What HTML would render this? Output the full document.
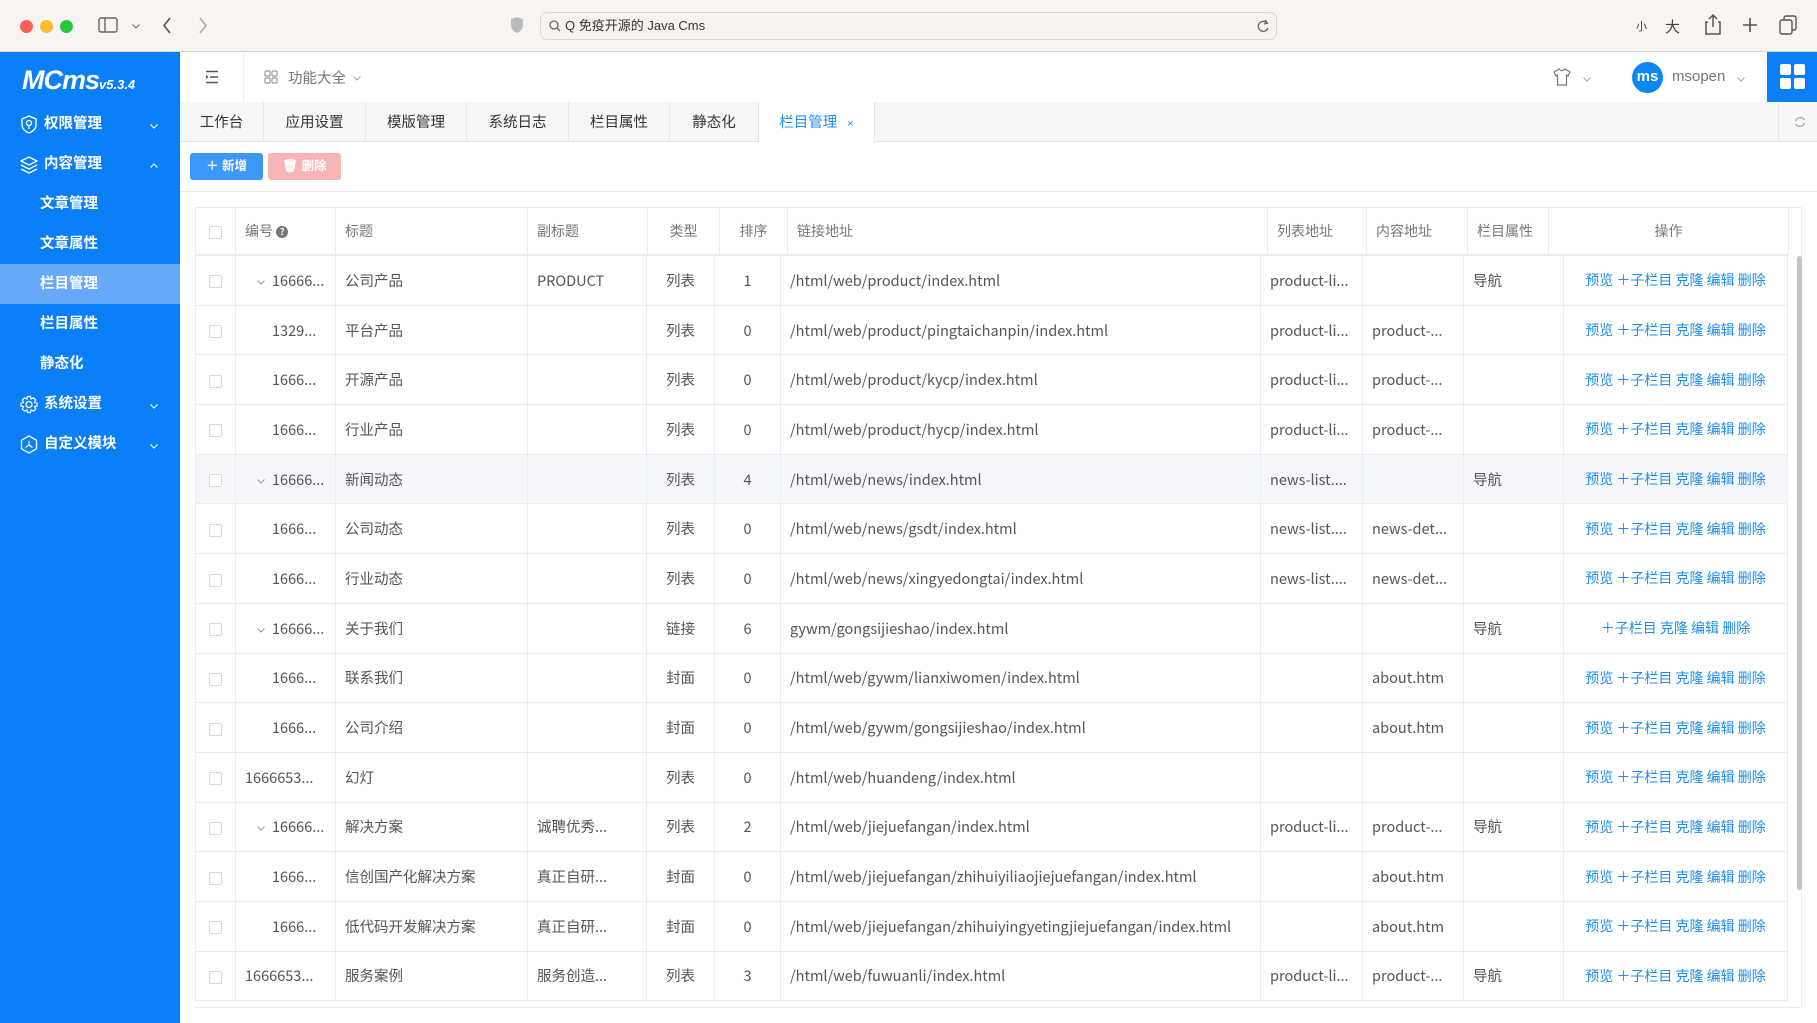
<!DOCTYPE html>
<html><head><meta charset="utf-8">
<style>
*{box-sizing:border-box;margin:0;padding:0}
body{width:1817px;height:1023px;overflow:hidden;background:#fff;font-family:"Liberation Sans","Noto Sans CJK SC",sans-serif;color:#555;position:relative}
.abs{position:absolute}
#chrome{left:0;top:0;width:1817px;height:52px;background:#f8f4f1;border-bottom:1px solid #dcd8d5}
.dot{position:absolute;top:20px;width:13px;height:13px;border-radius:50%}
#url{left:540px;top:12px;width:737px;height:28px;border:1px solid #dcd7d3;border-radius:7px;background:#f7f3f0;font-size:13px;color:#333;line-height:26px;padding-left:24px}
#side{left:0;top:52px;width:180px;height:971px;background:#0a7ff8;color:#fff}
.mi{position:absolute;left:0;width:180px;height:40px;line-height:40px;font-size:14.5px;font-weight:bold}
.mi svg.ic{position:absolute;left:20px;top:11px}
.chev{position:absolute;left:149px;top:17px}
#head{left:180px;top:52px;width:1637px;height:50px;background:#fff;box-shadow:0 2px 6px rgba(0,0,0,.06)}
#tabs{left:180px;top:102px;width:1637px;height:40px;background:#f7f7f7;border-bottom:1px solid #e4e4e8}
.tab{position:absolute;top:0;height:40px;line-height:42px;text-align:center;font-size:14.5px;color:#333;border-right:1px solid #e6e6e6}
.btn{position:absolute;top:153px;height:27px;line-height:27px;border-radius:3px;color:#fff;font-size:12.5px;font-weight:bold;text-align:center}
table{border-collapse:collapse;table-layout:fixed;position:absolute;font-family:"Noto Sans CJK SC","Liberation Sans",sans-serif}
td{border:1px solid #e9ecf3;font-size:14.5px;color:#555;white-space:nowrap;overflow:hidden;padding:0 9px}
.hd td{height:47px;color:#777;font-size:14px}
.bd td{height:49.7px}
.c{text-align:center}
.cb{display:inline-block;width:13px;height:13px;border:1px solid #d8d8d8;border-radius:2px;background:#fff;vertical-align:middle}
.op{color:#1d8cf3;font-size:14px;text-align:center;padding:0}
.ar{display:inline-block;width:10px;height:10px;margin-right:6px;vertical-align:middle}
</style></head><body>
<svg width="0" height="0" style="position:absolute"><defs><symbol id="dn" viewBox="0 0 10 10"><path d="M1.5 3.5 L5 7 L8.5 3.5" fill="none" stroke="currentColor" stroke-width="1.1"/></symbol></defs></svg>
<div id="chrome" class="abs">
 <div class="dot" style="left:20px;background:#fd5e57"></div>
 <div class="dot" style="left:40px;background:#febb2e"></div>
 <div class="dot" style="left:60px;background:#29c840"></div>
 <svg class="abs" style="left:98px;top:17px" width="20" height="17"><rect x="1" y="1" width="18" height="14" rx="2" fill="none" stroke="#666" stroke-width="1.4"/><line x1="7" y1="1" x2="7" y2="15" stroke="#666" stroke-width="1.4"/></svg>
 <svg class="abs" style="left:131px;top:21px;color:#777" width="10" height="10"><use href="#dn"/></svg>
 <svg class="abs" style="left:162px;top:17px" width="10" height="17"><path d="M8 1 L2 8.5 L8 16" fill="none" stroke="#555" stroke-width="1.6"/></svg>
 <svg class="abs" style="left:198px;top:17px" width="10" height="17"><path d="M2 1 L8 8.5 L2 16" fill="none" stroke="#aaa" stroke-width="1.6"/></svg>
 <svg class="abs" style="left:510px;top:16px" width="14" height="18"><path d="M7 1 L13 3 V9 C13 13 10 16 7 17 C4 16 1 13 1 9 V3Z" fill="#bbb"/></svg>
 <div id="url" class="abs">Q 免疫开源的 Java Cms
  <svg class="abs" style="left:8px;top:7px" width="12" height="12"><circle cx="5" cy="5" r="4" fill="none" stroke="#666" stroke-width="1.3"/><line x1="8" y1="8" x2="11" y2="11" stroke="#666" stroke-width="1.3"/></svg>
  <svg class="abs" style="left:715px;top:6px" width="14" height="15"><path d="M11 4 A5 5 0 1 0 12 9" fill="none" stroke="#666" stroke-width="1.3"/><path d="M9 1 L11.5 4 L8 5" fill="none" stroke="#666" stroke-width="1.3"/></svg>
 </div>
 <span class="abs" style="left:1636px;top:18px;font-size:11px;color:#444">小</span>
 <span class="abs" style="left:1665px;top:16px;font-size:15px;color:#444">大</span>
 <svg class="abs" style="left:1705px;top:13px" width="16" height="22"><path d="M3 9 H1 V21 H15 V9 H13 M8 14 V2 M4 6 L8 2 L12 6" fill="none" stroke="#555" stroke-width="1.5"/></svg>
 <svg class="abs" style="left:1742px;top:17px" width="16" height="16"><path d="M8 1 V15 M1 8 H15" stroke="#555" stroke-width="1.6"/></svg>
 <svg class="abs" style="left:1779px;top:15px" width="18" height="20"><rect x="5" y="1" width="12" height="14" rx="2" fill="none" stroke="#555" stroke-width="1.4"/><rect x="1" y="5" width="12" height="14" rx="2" fill="#f8f4f1" stroke="#555" stroke-width="1.4"/></svg>
</div>

<div id="side" class="abs">
 <div class="abs" style="left:22px;top:13px;font-size:27px;font-weight:bold;font-style:italic;letter-spacing:-1px">MCms<span style="font-size:13px;letter-spacing:0">v5.3.4</span></div>
 <div class="mi" style="top:52px;padding-left:44px"><svg class="ic" width="18" height="19"><path d="M9 1 L16 4 V10 C16 14 12 17 9 18 C6 17 2 14 2 10 V4Z" fill="none" stroke="#fff" stroke-width="1.4"/><circle cx="9" cy="8" r="2.5" fill="none" stroke="#fff" stroke-width="1.3"/><line x1="9" y1="10.5" x2="9" y2="14" stroke="#fff" stroke-width="1.3"/></svg>权限管理<svg class="chev" width="10" height="10"><use href="#dn"/></svg></div>
 <div class="mi" style="top:92px;padding-left:44px"><svg class="ic" width="18" height="19"><path d="M9 2 L17 6 L9 10 L1 6Z M1 10 L9 14 L17 10 M1 14 L9 18 L17 14" fill="none" stroke="#fff" stroke-width="1.3"/></svg>内容管理<svg class="chev" width="10" height="10" style="transform:rotate(180deg)"><use href="#dn"/></svg></div>
 <div class="mi" style="top:132px;padding-left:40px">文章管理</div>
 <div class="mi" style="top:172px;padding-left:40px">文章属性</div>
 <div class="mi" style="top:212px;padding-left:40px;background:#66a9fb">栏目管理</div>
 <div class="mi" style="top:252px;padding-left:40px">栏目属性</div>
 <div class="mi" style="top:292px;padding-left:40px">静态化</div>
 <div class="mi" style="top:332px;padding-left:44px"><svg class="ic" width="18" height="19"><circle cx="9" cy="9.5" r="3" fill="none" stroke="#fff" stroke-width="1.3"/><path d="M7.5 1.5 H10.5 L11 4 L13.5 2.8 L15.7 5 L14.5 7.5 L17 8 V11 L14.5 11.5 L15.7 14 L13.5 16.2 L11 15 L10.5 17.5 H7.5 L7 15 L4.5 16.2 L2.3 14 L3.5 11.5 L1 11 V8 L3.5 7.5 L2.3 5 L4.5 2.8 L7 4Z" fill="none" stroke="#fff" stroke-width="1.2"/></svg>系统设置<svg class="chev" width="10" height="10"><use href="#dn"/></svg></div>
 <div class="mi" style="top:372px;padding-left:44px"><svg class="ic" width="18" height="19"><path d="M9 1 L16.5 5.2 V13.8 L9 18 L1.5 13.8 V5.2Z" fill="none" stroke="#fff" stroke-width="1.3"/><path d="M9 6 V10 L5.5 12.5 M9 10 L12.5 12.5" fill="none" stroke="#fff" stroke-width="1.2"/></svg>自定义模块<svg class="chev" width="10" height="10"><use href="#dn"/></svg></div>
</div>

<div id="head" class="abs">
 <svg class="abs" style="left:25px;top:18px" width="14" height="14"><path d="M1 1.5 H13 M5 7 H13 M1 12.5 H13" stroke="#555" stroke-width="1.5"/><path d="M1 5 L3.5 7 L1 9Z" fill="#555"/></svg>
 <div class="abs" style="left:63px;top:0;width:1px;height:50px;background:#eee"></div>
 <svg class="abs" style="left:84px;top:18px" width="14" height="14"><rect x="1" y="1" width="5" height="5" rx="1" fill="none" stroke="#999" stroke-width="1.2"/><rect x="8" y="1" width="5" height="5" rx="1" fill="none" stroke="#999" stroke-width="1.2"/><rect x="1" y="8" width="5" height="5" rx="1" fill="none" stroke="#999" stroke-width="1.2"/><rect x="8" y="8" width="5" height="5" rx="1" fill="none" stroke="#999" stroke-width="1.2"/></svg>
 <span class="abs" style="left:108px;top:15px;font-size:14.5px;color:#777">功能大全</span>
 <svg class="abs" style="left:172px;top:21px;color:#aaa" width="10" height="10"><use href="#dn"/></svg>
 <svg class="abs" style="left:1373px;top:16px" width="18" height="18"><path d="M6 1 L1 4 L3 8 L4.5 7 V17 H13.5 V7 L15 8 L17 4 L12 1 C11 3 7 3 6 1Z" fill="none" stroke="#777" stroke-width="1.2"/></svg>
 <svg class="abs" style="left:1402px;top:22px;color:#aaa" width="10" height="10"><use href="#dn"/></svg>
 <div class="abs" style="left:1452px;top:10px;width:31px;height:31px;border-radius:50%;background:#0a86f5;color:#fff;font-size:15px;font-weight:bold;text-align:center;line-height:30px">ms</div>
 <span class="abs" style="left:1492px;top:16px;font-size:15px;color:#777">msopen</span>
 <svg class="abs" style="left:1556px;top:22px;color:#aaa" width="10" height="10"><use href="#dn"/></svg>
 <div class="abs" style="left:1587px;top:0;width:50px;height:50px;background:#0a7ff8">
  <svg class="abs" style="left:13px;top:12px" width="25" height="25"><rect x="0" y="0" width="11" height="11" rx="2" fill="#fff"/><rect x="14" y="0" width="11" height="11" rx="2" fill="#fff"/><rect x="0" y="14" width="11" height="11" rx="2" fill="#fff"/><rect x="14" y="14" width="11" height="11" rx="2" fill="#fff"/></svg>
 </div>
</div>

<div id="tabs" class="abs">
 <div class="tab" style="left:0;width:84px">工作台</div>
 <div class="tab" style="left:84px;width:102px">应用设置</div>
 <div class="tab" style="left:186px;width:101px">模版管理</div>
 <div class="tab" style="left:287px;width:102px">系统日志</div>
 <div class="tab" style="left:389px;width:101px">栏目属性</div>
 <div class="tab" style="left:490px;width:89px">静态化</div>
 <div class="tab" style="left:579px;width:116px;background:#fff;color:#1d8cf3;height:41px">栏目管理 <span style="font-size:11px;margin-left:6px">×</span></div>
 <div class="abs" style="left:1598px;top:0;width:1px;height:40px;background:#e4e4e4"></div>
 <svg class="abs" style="left:1614px;top:14px" width="12" height="12"><path d="M10.5 4 A5 5 0 0 0 1.5 5 M1.5 8 A5 5 0 0 0 10.5 7" fill="none" stroke="#999" stroke-width="1.1"/></svg>
</div>

<div class="btn" style="left:190px;width:73px;background:#3d98f7">＋ 新增</div>
<div class="btn" style="left:268px;width:73px;background:#f8b5b5">🗑 删除</div>
<div class="abs" style="left:180px;top:191px;width:1637px;height:1px;background:#e9ecf3"></div>

<div class="abs" style="left:195px;top:207px;width:1607px;height:801px;border:1px solid #e9ecf3;border-left:none"></div>
<div class="abs" style="left:1797px;top:256px;width:5px;height:634px;background:#c5c5c8;border-radius:3px"></div>

<table class="hd" style="left:195px;top:207px;width:1593px">
<colgroup><col style="width:40px"><col style="width:100px"><col style="width:192px"><col style="width:120px"><col style="width:72px"><col style="width:68px"><col style="width:480px"><col style="width:99px"><col style="width:101px"><col style="width:81px"><col style="width:240px"></colgroup>
<tr><td class="c"><span class="cb"></span></td><td>编号 <span style="display:inline-block;width:12px;height:12px;border-radius:50%;background:#777;color:#fff;font-size:9px;text-align:center;line-height:12px;font-weight:bold;vertical-align:middle">?</span></td><td>标题</td><td>副标题</td><td class="c">类型</td><td class="c">排序</td><td>链接地址</td><td>列表地址</td><td>内容地址</td><td>栏目属性</td><td class="c">操作</td></tr>
</table>

<table class="bd" style="left:195px;top:255px;width:1592px">
<colgroup><col style="width:40px"><col style="width:100px"><col style="width:192px"><col style="width:119px"><col style="width:68px"><col style="width:66px"><col style="width:480px"><col style="width:102px"><col style="width:101px"><col style="width:100px"><col style="width:224px"></colgroup>
<tr><td class="c"><span class="cb"></span></td><td style="padding-left:20px;color:#555"><svg class="ar" style="color:#999"><use href="#dn"/></svg>16666...</td><td>公司产品</td><td>PRODUCT</td><td class="c">列表</td><td class="c">1</td><td>/html/web/product/index.html</td><td>product-li...</td><td></td><td>导航</td><td class="op">预览 ＋子栏目 克隆 编辑 删除</td></tr>
<tr><td class="c"><span class="cb"></span></td><td style="padding-left:36px">1329...</td><td>平台产品</td><td></td><td class="c">列表</td><td class="c">0</td><td>/html/web/product/pingtaichanpin/index.html</td><td>product-li...</td><td>product-...</td><td></td><td class="op">预览 ＋子栏目 克隆 编辑 删除</td></tr>
<tr><td class="c"><span class="cb"></span></td><td style="padding-left:36px">1666...</td><td>开源产品</td><td></td><td class="c">列表</td><td class="c">0</td><td>/html/web/product/kycp/index.html</td><td>product-li...</td><td>product-...</td><td></td><td class="op">预览 ＋子栏目 克隆 编辑 删除</td></tr>
<tr><td class="c"><span class="cb"></span></td><td style="padding-left:36px">1666...</td><td>行业产品</td><td></td><td class="c">列表</td><td class="c">0</td><td>/html/web/product/hycp/index.html</td><td>product-li...</td><td>product-...</td><td></td><td class="op">预览 ＋子栏目 克隆 编辑 删除</td></tr>
<tr style="background:#f5f7fa"><td class="c"><span class="cb"></span></td><td style="padding-left:20px"><svg class="ar" style="color:#999"><use href="#dn"/></svg>16666...</td><td>新闻动态</td><td></td><td class="c">列表</td><td class="c">4</td><td>/html/web/news/index.html</td><td>news-list....</td><td></td><td>导航</td><td class="op">预览 ＋子栏目 克隆 编辑 删除</td></tr>
<tr><td class="c"><span class="cb"></span></td><td style="padding-left:36px">1666...</td><td>公司动态</td><td></td><td class="c">列表</td><td class="c">0</td><td>/html/web/news/gsdt/index.html</td><td>news-list....</td><td>news-det...</td><td></td><td class="op">预览 ＋子栏目 克隆 编辑 删除</td></tr>
<tr><td class="c"><span class="cb"></span></td><td style="padding-left:36px">1666...</td><td>行业动态</td><td></td><td class="c">列表</td><td class="c">0</td><td>/html/web/news/xingyedongtai/index.html</td><td>news-list....</td><td>news-det...</td><td></td><td class="op">预览 ＋子栏目 克隆 编辑 删除</td></tr>
<tr><td class="c"><span class="cb"></span></td><td style="padding-left:20px"><svg class="ar" style="color:#999"><use href="#dn"/></svg>16666...</td><td>关于我们</td><td></td><td class="c">链接</td><td class="c">6</td><td>gywm/gongsijieshao/index.html</td><td></td><td></td><td>导航</td><td class="op">＋子栏目 克隆 编辑 删除</td></tr>
<tr><td class="c"><span class="cb"></span></td><td style="padding-left:36px">1666...</td><td>联系我们</td><td></td><td class="c">封面</td><td class="c">0</td><td>/html/web/gywm/lianxiwomen/index.html</td><td></td><td>about.htm</td><td></td><td class="op">预览 ＋子栏目 克隆 编辑 删除</td></tr>
<tr><td class="c"><span class="cb"></span></td><td style="padding-left:36px">1666...</td><td>公司介绍</td><td></td><td class="c">封面</td><td class="c">0</td><td>/html/web/gywm/gongsijieshao/index.html</td><td></td><td>about.htm</td><td></td><td class="op">预览 ＋子栏目 克隆 编辑 删除</td></tr>
<tr><td class="c"><span class="cb"></span></td><td>1666653...</td><td>幻灯</td><td></td><td class="c">列表</td><td class="c">0</td><td>/html/web/huandeng/index.html</td><td></td><td></td><td></td><td class="op">预览 ＋子栏目 克隆 编辑 删除</td></tr>
<tr><td class="c"><span class="cb"></span></td><td style="padding-left:20px"><svg class="ar" style="color:#999"><use href="#dn"/></svg>16666...</td><td>解决方案</td><td>诚聘优秀...</td><td class="c">列表</td><td class="c">2</td><td>/html/web/jiejuefangan/index.html</td><td>product-li...</td><td>product-...</td><td>导航</td><td class="op">预览 ＋子栏目 克隆 编辑 删除</td></tr>
<tr><td class="c"><span class="cb"></span></td><td style="padding-left:36px">1666...</td><td>信创国产化解决方案</td><td>真正自研...</td><td class="c">封面</td><td class="c">0</td><td>/html/web/jiejuefangan/zhihuiyiliaojiejuefangan/index.html</td><td></td><td>about.htm</td><td></td><td class="op">预览 ＋子栏目 克隆 编辑 删除</td></tr>
<tr><td class="c"><span class="cb"></span></td><td style="padding-left:36px">1666...</td><td>低代码开发解决方案</td><td>真正自研...</td><td class="c">封面</td><td class="c">0</td><td>/html/web/jiejuefangan/zhihuiyingyetingjiejuefangan/index.html</td><td></td><td>about.htm</td><td></td><td class="op">预览 ＋子栏目 克隆 编辑 删除</td></tr>
<tr><td class="c"><span class="cb"></span></td><td>1666653...</td><td>服务案例</td><td>服务创造...</td><td class="c">列表</td><td class="c">3</td><td>/html/web/fuwuanli/index.html</td><td>product-li...</td><td>product-...</td><td>导航</td><td class="op">预览 ＋子栏目 克隆 编辑 删除</td></tr>
</table>
</body></html>
